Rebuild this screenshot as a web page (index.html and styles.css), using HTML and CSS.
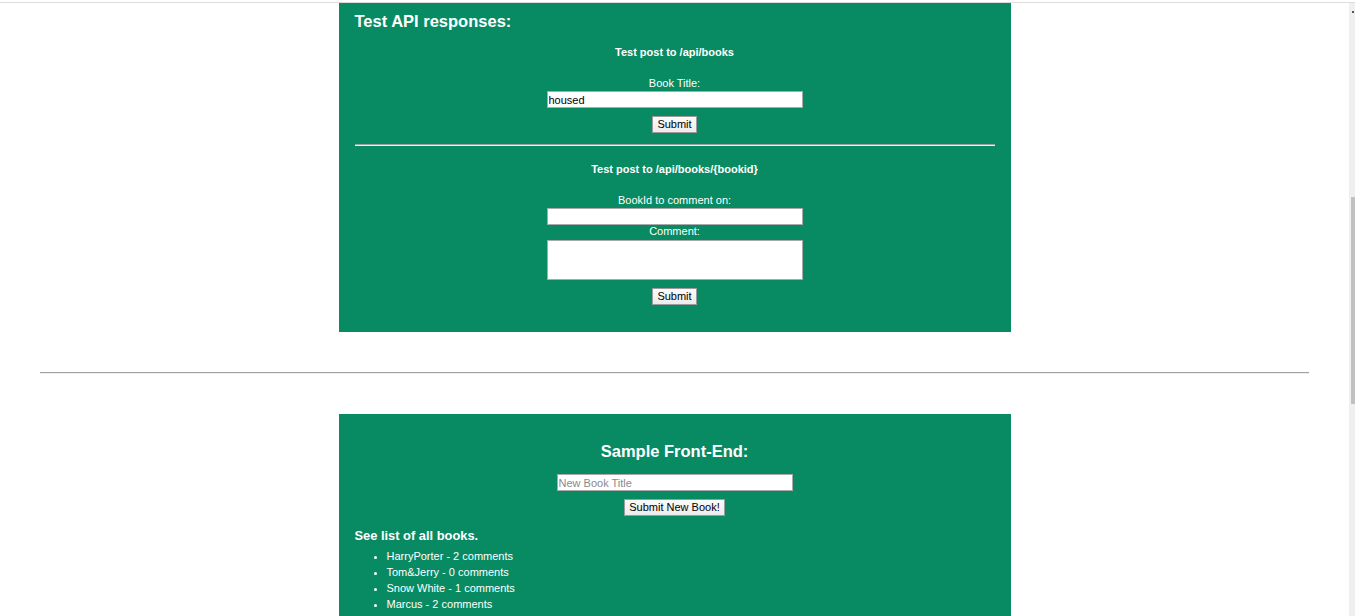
FILE: index.html
```html
<!DOCTYPE html>
<html lang="en">
<head>
<meta charset="utf-8">
<title>Personal Library</title>
<link rel="stylesheet" href="styles.css">
</head>
<body>
<div class="topline"></div>
<div class="page">
  <section class="panel panel-api">
    <h2 class="panel-title">Test API responses:</h2>
    <form class="test-form">
      <h4 class="form-title">Test post to /api/books</h4>
      <label class="field-label label-first">Book Title:</label>
      <input class="text-input" type="text" value="housed">
      <button class="btn btn-submit" type="button">Submit</button>
    </form>
    <hr class="inner-rule">
    <form class="test-form">
      <h4 class="form-title form-title-2">Test post to /api/books/{bookid}</h4>
      <label class="field-label label-bookid">BookId to comment on:</label>
      <input class="text-input" type="text">
      <label class="field-label label-comment">Comment:</label>
      <textarea class="text-area"></textarea>
      <button class="btn btn-submit" type="button">Submit</button>
    </form>
  </section>

  <hr class="page-rule">

  <section class="panel panel-ui">
    <h2 class="panel-title ui-title">Sample Front-End:</h2>
    <form class="test-form">
      <input class="text-input new-book" type="text" placeholder="New Book Title">
      <button class="btn btn-new" type="button">Submit New Book!</button>
    </form>
    <h3 class="list-title">See list of all books.</h3>
    <ul class="book-list">
      <li>HarryPorter - 2 comments</li>
      <li>Tom&amp;Jerry - 0 comments</li>
      <li>Snow White - 1 comments</li>
      <li>Marcus - 2 comments</li>
    </ul>
  </section>
</div>
<div class="scrollbar"><div class="scroll-arrow"></div><div class="scroll-thumb"></div></div>
</body>
</html>
```
FILE: styles.css
```css
html, body {
  margin: 0;
  padding: 0;
  background: #fff;
  overflow: hidden;
}
body {
  font-family: "Liberation Sans", Arial, sans-serif;
  font-size: 11px;
  color: #000;
}
.topline {
  height: 2px;
  border-bottom: 1px solid #dcdcdc;
}
.page {
  margin-right: 6px;
}
.panel {
  box-sizing: border-box;
  width: 672px;
  margin: 0 auto;
  background: #088a62;
  color: #fff;
  padding: 0 16px;
}
.panel-api {
  height: 329px;
  padding-top: 9px;
}
.panel-title {
  margin: 0;
  font-size: 16.5px;
  line-height: 19px;
  font-weight: bold;
}
.test-form {
  display: flex;
  flex-direction: column;
  align-items: center;
}
.form-title {
  margin: 15px 0 0;
  font-size: 11px;
  line-height: 13px;
  font-weight: bold;
}
.form-title-2 {
  margin-top: 17px;
}
.field-label {
  display: block;
  font-size: 11px;
  line-height: 13px;
  margin-bottom: 1px;
}
.label-first { margin-top: 18px; }
.label-bookid { margin-top: 18px; }
.label-comment { margin-top: 0; margin-bottom: 2px; }
.text-input {
  box-sizing: border-box;
  width: 256px;
  height: 17px;
  margin: 0;
  padding: 0 1px;
  border: 1px solid #a9a9a9;
  background: #fff;
  font-family: "Liberation Sans", Arial, sans-serif;
  font-size: 11px;
  color: #000;
  outline: none;
}
.text-input::placeholder {
  color: #8a8a8a;
}
.text-area {
  box-sizing: border-box;
  width: 256px;
  height: 40px;
  margin: 0;
  padding: 1px;
  border: 1px solid #a9a9a9;
  background: #fff;
  resize: none;
  font-family: "Liberation Sans", Arial, sans-serif;
  font-size: 11px;
}
.btn {
  box-sizing: border-box;
  height: 17px;
  margin: 8px 0 0;
  padding: 0 2px;
  border: 1px solid #9c9c9c;
  border-radius: 0;
  background: linear-gradient(#fbfbfb, #ececec);
  font-family: "Liberation Sans", Arial, sans-serif;
  font-size: 11px;
  line-height: 13px;
  color: #000;
  white-space: nowrap;
}
.btn-submit { width: 45px; }
.inner-rule {
  margin: 11px 0 0;
  height: 0;
  border: 0;
  border-top: 1px solid #a0a0a0;
  border-bottom: 1px solid #eeeeee;
}
.page-rule {
  margin: 40px 40px 0;
  height: 0;
  border: 0;
  border-top: 1px solid #a0a0a0;
  border-bottom: 1px solid #eeeeee;
}
.panel-ui {
  margin-top: 40px;
  padding-top: 28px;
  padding-bottom: 40px;
}
.ui-title {
  text-align: center;
}
.new-book {
  width: 236px;
  margin-top: 13px;
}
.btn-new {
  width: 101px;
  height: 17px;
}
.list-title {
  margin: 12px 0 0;
  font-size: 12.87px;
  line-height: 15px;
  font-weight: bold;
}
.book-list {
  margin: 5px 0 0;
  padding-left: 32px;
  list-style: disc;
}
.book-list li {
  line-height: 16px;
  font-size: 11px;
}
.scrollbar {
  position: fixed;
  top: 3px;
  right: 0;
  bottom: 0;
  width: 6px;
  background: #efefef;
}
.scroll-arrow {
  position: absolute;
  top: 8px;
  right: 1px;
  width: 2px;
  height: 2px;
  background: #555;
}
.scroll-thumb {
  position: absolute;
  top: 194px;
  right: 0;
  width: 4px;
  height: 207px;
  background: #c1c1c1;
}
```
